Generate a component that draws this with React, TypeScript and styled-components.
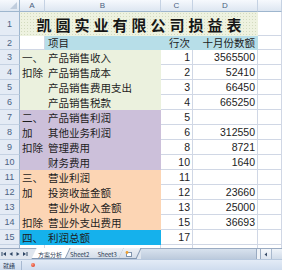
import styled, { createGlobalStyle } from 'styled-components';

const GlobalStyle = createGlobalStyle`
  html, body {
    margin: 0;
    padding: 0;
    overflow: hidden;
    background: #ffffff;
  }
  body {
    font-family: 'Noto Sans CJK SC', 'Liberation Sans', sans-serif;
  }
`;

type Fill = 'none' | 'green' | 'purple' | 'peach' | 'blue' | 'sky';

const FILLS: Record<Fill, string> = {
  none: '#ffffff',
  green: '#ebf1de', // 销售
  purple: '#ccc0da', // 利润
  peach: '#fcd5b4', // 营业
  blue: '#15b1ec', // 总额
  sky: '#b7dee8', // header row
};

interface LineItem {
  mark: string;
  item: string;
  line: string;
  amount: string;
  fill: Fill;
}

const lineItems: LineItem[] = [
  { mark: '一、', item: '产品销售收入', line: '1', amount: '3565500', fill: 'green' },
  { mark: '扣除', item: '产品销售成本', line: '2', amount: '52410', fill: 'green' },
  { mark: '', item: '产品销售费用支出', line: '3', amount: '66450', fill: 'green' },
  { mark: '', item: '产品销售税款', line: '4', amount: '665250', fill: 'green' },
  { mark: '二、', item: '产品销售利润', line: '5', amount: '', fill: 'purple' },
  { mark: '加', item: '其他业务利润', line: '6', amount: '312550', fill: 'purple' },
  { mark: '扣除', item: '管理费用', line: '8', amount: '8721', fill: 'purple' },
  { mark: '', item: '财务费用', line: '10', amount: '1640', fill: 'purple' },
  { mark: '三、', item: '营业利润', line: '11', amount: '', fill: 'peach' },
  { mark: '加', item: '投资收益金额', line: '12', amount: '23660', fill: 'peach' },
  { mark: '', item: '营业外收入金额', line: '13', amount: '25000', fill: 'peach' },
  { mark: '扣除', item: '营业外支出费用', line: '15', amount: '36693', fill: 'peach' },
  { mark: '四、', item: '利润总额', line: '17', amount: '', fill: 'blue' },
];

const columns = ['A', 'B', 'C', 'D', ''];
const tabs = ['方案分析', 'Sheet2', 'Sheet3'];

export default function App() {
  return (
    <>
      <GlobalStyle />
      <Window>
        <Sheet>
          <Corner />
          {columns.map((col, i) => (
            <ColHead key={i}>{col}</ColHead>
          ))}

          <RowHead>1</RowHead>
          <Title>凯圆实业有限公司损益表</Title>
          <Cell />

          <RowHead>2</RowHead>
          <Cell />
          <Cell fill="sky" indent>项目</Cell>
          <Cell fill="sky" align="right">行次</Cell>
          <Cell fill="sky" align="right">十月份数额</Cell>
          <Cell />

          {lineItems.map((row, i) => (
            <Row key={i}>
              <RowHead>{i + 3}</RowHead>
              <Cell fill={row.fill} tight>{row.mark}</Cell>
              <Cell fill={row.fill} indent>{row.item}</Cell>
              <Cell align="right" numeric>{row.line}</Cell>
              <Cell align="right" numeric>{row.amount}</Cell>
              <Cell />
            </Row>
          ))}

          {/* row 16, only a sliver of it shows above the tabs */}
          <RowHead />
          <Cell />
          <Cell />
          <Cell />
          <Cell />
          <Cell />
        </Sheet>

        <TabStrip>
          <NavGroup>
            <NavIcon viewBox="0 0 6 6">
              <rect x="0.5" y="1" width="1" height="4" />
              <path d="M5 1 L2 3 L5 5 Z" />
            </NavIcon>
            <NavIcon viewBox="0 0 6 6">
              <path d="M4.5 1 L1.5 3 L4.5 5 Z" />
            </NavIcon>
            <NavIcon viewBox="0 0 6 6">
              <path d="M1.5 1 L4.5 3 L1.5 5 Z" />
            </NavIcon>
            <NavIcon viewBox="0 0 6 6">
              <path d="M1 1 L4 3 L1 5 Z" />
              <rect x="4.5" y="1" width="1" height="4" />
            </NavIcon>
          </NavGroup>
          {tabs.map((tab, i) => (
            <Tab key={tab} active={i === 0}>
              <TabLabel>{tab}</TabLabel>
            </Tab>
          ))}
          <Tab>
            <TabLabel>
              <svg width="8" height="6" viewBox="0 0 8 6">
                <rect x="1.5" y="1.5" width="5" height="4" fill="#fff" stroke="#7f93ad" strokeWidth="1" />
                <circle cx="2" cy="1.5" r="1.4" fill="#f0a030" />
              </svg>
            </TabLabel>
          </Tab>
          <TabFiller />
          <SplitBox />
          <ScrollButton>
            <svg width="4" height="5" viewBox="0 0 4 5">
              <path d="M3 0.5 L0.5 2.5 L3 4.5 Z" fill="#3c4f6b" />
            </svg>
          </ScrollButton>
          <ScrollThumb />
        </TabStrip>

        <StatusBar>
          <StatusText>就绪</StatusText>
          <StatusDivider />
          <RecordDot />
        </StatusBar>
      </Window>
    </>
  );
}

const Window = styled.div`
  width: 282px;
  height: 270px;
  display: flex;
  flex-direction: column;
  overflow: hidden;
`;

const Sheet = styled.div`
  flex: 1;
  min-height: 0;
  display: grid;
  grid-template-columns: 20px 25px 116px 32px 65px 1fr;
  grid-template-rows: 12px 24px 14px repeat(13, 15px) 15px;
  overflow: hidden;
  color: #1c1c1c;
`;

const Row = styled.div`
  display: contents;
`;

const Corner = styled.div`
  position: relative;
  background: linear-gradient(#f6f9fd, #dde6f1);
  border-right: 1px solid #9eb6ce;
  border-bottom: 1px solid #9eb6ce;
  box-sizing: border-box;

  &::after {
    content: '';
    position: absolute;
    right: 2px;
    bottom: 2px;
    border-left: 7px solid transparent;
    border-bottom: 7px solid #c0cddd;
  }
`;

const ColHead = styled.div`
  background: linear-gradient(#f6f9fd, #dde6f1);
  border-right: 1px solid #c5d2e3;
  border-bottom: 1px solid #9eb6ce;
  box-sizing: border-box;
  display: flex;
  align-items: center;
  justify-content: center;
  font-family: 'Liberation Sans', sans-serif;
  font-size: 8px;
  color: #4a5f7e;
`;

const RowHead = styled.div`
  background: #e4ebf5;
  border-right: 1px solid #9eb6ce;
  border-bottom: 1px solid #c5d2e3;
  box-sizing: border-box;
  display: flex;
  align-items: center;
  justify-content: center;
  font-family: 'Liberation Sans', sans-serif;
  font-size: 9px;
  color: #4a6284;
`;

const Title = styled.div`
  grid-column: 2 / span 4;
  background-color: #eef2e0;
  background-image: radial-gradient(circle, rgba(160, 175, 130, 0.35) 0.6px, transparent 0.8px);
  background-size: 3px 3px;
  display: flex;
  align-items: center;
  justify-content: center;
  padding-left: 4px;
  font-family: 'Noto Sans CJK SC', sans-serif;
  font-weight: 700;
  font-size: 15px;
  letter-spacing: 4px;
  color: #161616;
  white-space: nowrap;
`;

interface CellProps {
  fill?: Fill;
  align?: 'left' | 'right';
  indent?: boolean;
  tight?: boolean;
  numeric?: boolean;
}

const Cell = styled.div<CellProps>`
  box-sizing: border-box;
  background: ${p => FILLS[p.fill ?? 'none']};
  border-right: 1px solid ${p => (p.fill && p.fill !== 'none' ? 'transparent' : '#d0d7e5')};
  border-bottom: 1px solid ${p => (p.fill && p.fill !== 'none' ? 'transparent' : '#d0d7e5')};
  display: flex;
  align-items: center;
  justify-content: ${p => (p.align === 'right' ? 'flex-end' : 'flex-start')};
  padding: 0 ${p => (p.align === 'right' ? '2px' : '0')} 0 ${p => (p.indent ? '3px' : p.tight ? '2px' : '0')};
  font-family: ${p => (p.numeric ? "'Liberation Sans', sans-serif" : "'Noto Sans CJK SC', sans-serif")};
  font-size: 10.5px;
  white-space: nowrap;
  overflow: hidden;
`;

const TabStrip = styled.div`
  height: 11px;
  flex-shrink: 0;
  display: flex;
  align-items: stretch;
  background: #dfe6ef;
  border-top: 1px solid #9aabc2;
  box-sizing: border-box;
`;

const NavGroup = styled.div`
  display: flex;
  align-items: center;
  gap: 1px;
  padding: 0 2px 0 1px;
  width: 34px;
  box-sizing: border-box;
`;

const NavIcon = styled.svg`
  width: 6px;
  height: 6px;
  fill: #2f4665;
`;

const Tab = styled.div<{ active?: boolean }>`
  position: relative;
  display: flex;
  align-items: center;
  padding: 0 6px 0 4px;
  margin-right: -2px;
  z-index: ${p => (p.active ? 2 : 1)};

  &::before {
    content: '';
    position: absolute;
    inset: -1px 0 0 0;
    transform: skewX(-25deg);
    background: ${p => (p.active ? '#ffffff' : 'linear-gradient(#eef2f7, #d5dde8)')};
    border-right: 1px solid #8196b1;
    border-bottom: 1px solid #8196b1;
  }
`;

const TabLabel = styled.span`
  position: relative;
  display: flex;
  align-items: center;
  font-family: 'Noto Sans CJK SC', 'Liberation Sans', sans-serif;
  font-size: 6px;
  color: #2a3a52;
  white-space: nowrap;
`;

const TabFiller = styled.div`
  flex: 1;
  margin-left: 4px;
  background: linear-gradient(#d8e2ee, #bccadc);
`;

const SplitBox = styled.div`
  width: 3px;
  background: #eef2f7;
  border-left: 1px solid #9aabc2;
  border-right: 1px solid #9aabc2;
`;

const ScrollButton = styled.div`
  width: 10px;
  display: flex;
  align-items: center;
  justify-content: center;
  background: linear-gradient(#f4f7fb, #dbe3ee);
  border-right: 1px solid #a9b9ce;
`;

const ScrollThumb = styled.div`
  flex: 0 0 10px;
  background: linear-gradient(#eef3f9, #d0dbe9);
`;

const StatusBar = styled.div`
  height: 11px;
  flex-shrink: 0;
  display: flex;
  align-items: center;
  background: linear-gradient(#e3ebf6, #cfdcee);
  border-top: 1px solid #b7c8de;
  box-sizing: border-box;
`;

const StatusText = styled.span`
  padding-left: 3px;
  width: 18px;
  font-family: 'Noto Sans CJK SC', sans-serif;
  font-size: 6px;
  color: #1e3350;
`;

const StatusDivider = styled.div`
  width: 1px;
  height: 9px;
  background: #a7b9d1;
`;

const RecordDot = styled.div`
  width: 4px;
  height: 4px;
  margin-left: 9px;
  border-radius: 50%;
  background: radial-gradient(circle at 35% 35%, #ff9a80, #d42a10);
`;
